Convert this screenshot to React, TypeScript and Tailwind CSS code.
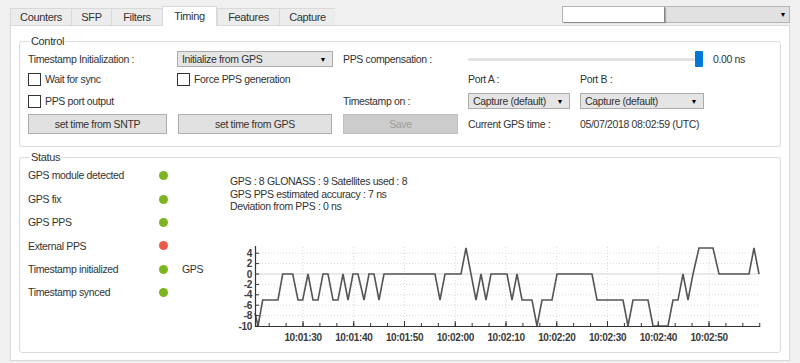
import React from "react";

const pts: [number, number][] = [
  [255, -7.5], [258, -10], [262.7, -5], [278, -5], [282.7, 0], [292.7, 0], [298, -5], [302.7, -5],
  [308, 0], [313, -5], [318, -5], [323, 0], [328, 0], [333, -5], [338, -5], [343, 0], [348, -5],
  [353, 0], [358, 0], [364, -5], [369, 0], [374, 0], [379, -5], [384, 0], [435, 0], [440, -5],
  [445, 0], [461, 0], [466, 5], [476, -5], [481, 0], [486, -5], [491, 0], [507, 0], [512, -5],
  [517, 0], [522, -5], [532, -5], [537, -10], [542, -5], [552, -5], [557, 0], [592, 0], [597, -5],
  [623, -5], [628, -10], [633, -5], [648, -5], [653, -10], [668, -10], [673, -5], [678, -5],
  [683, 0], [688, -5], [693, 0], [699, 5], [713, 5], [719, 0], [749, 0], [754, 5], [759, 0],
];

const vy = (v: number) => 273 - 5.2 * v;

function Chart() {
  const majors = [0, 1, 2, 3, 4, 5, 6, 7, 8].map((k) => 303 + 50.75 * k);
  const labels = ["10:01:30", "10:01:40", "10:01:50", "10:02:00", "10:02:10", "10:02:20", "10:02:30", "10:02:40", "10:02:50"];
  const minors: number[] = [];
  for (let x = 303 - 50.75; x < 760; x += 50.75 / 3) {
    if (x > 256) minors.push(x);
  }
  const yv = [4, 2, 0, -2, -4, -6, -8, -10];
  const ff = "'Liberation Sans', Arial, sans-serif";
  return (
    <svg width={544} height={106} viewBox="222 240 544 106" className="block">
      {yv.filter((v) => v !== 0 && v !== -10).map((v) => (
        <line key={v} x1={256} x2={760} y1={vy(v)} y2={vy(v)} stroke="#dcdcdc" strokeWidth={1} strokeDasharray="1 2" />
      ))}
      {majors.map((x) => (
        <line key={x} x1={x} x2={x} y1={246} y2={325} stroke="#dcdcdc" strokeWidth={1} strokeDasharray="1 2" />
      ))}
      <line x1={256} x2={760} y1={vy(0)} y2={vy(0)} stroke="#e2e2e2" strokeWidth={1.5} />
      <polyline
        points={pts.map(([x, v]) => `${x},${vy(v)}`).join(" ")}
        fill="none"
        stroke="#555"
        strokeWidth={1.6}
        strokeLinejoin="miter"
      />
      <line x1={255.5} x2={255.5} y1={245} y2={326} stroke="#333" strokeWidth={1.2} />
      <line x1={255} x2={760} y1={325.5} y2={325.5} stroke="#333" strokeWidth={1.2} />
      {yv.map((v) => (
        <g key={v}>
          <line x1={255} x2={259} y1={vy(v)} y2={vy(v)} stroke="#333" strokeWidth={1} />
          <text x={252} y={vy(v) + 3.6} textAnchor="end" fontSize={10} fontWeight={700} fill="#3a3a3a" fontFamily={ff}>
            {v}
          </text>
        </g>
      ))}
      {minors.map((x) => (
        <line key={"m" + x} x1={x} x2={x} y1={322} y2={326} stroke="#333" strokeWidth={1} />
      ))}
      {majors.map((x, i) => (
        <g key={"l" + x}>
          <line x1={x} x2={x} y1={320} y2={326} stroke="#333" strokeWidth={1} />
          <text x={x} y={340} textAnchor="middle" fontSize={10} fontWeight={700} fill="#3a3a3a" fontFamily={ff}>
            {labels[i]}
          </text>
        </g>
      ))}
    </svg>
  );
}

function Checkbox({ label }: { label: string }) {
  return (
    <div className="flex items-center gap-[4px]">
      <div className="w-[13px] h-[13px] border border-[#333] bg-white" />
      <span>{label}</span>
    </div>
  );
}

function Select({ text, w }: { text: string; w: string }) {
  return (
    <div className={`${w} h-[16px] bg-[#e5e5e5] border border-[#acacac] flex items-center justify-between pl-[4px] pr-[6px]`}>
      <span>{text}</span>
      <span className="text-[7px] leading-none text-black">▼</span>
    </div>
  );
}

function Dot({ red }: { red?: boolean }) {
  return <div className={`w-[9px] h-[9px] rounded-full ${red ? "bg-[#ea5a47]" : "bg-[#7cb51d]"}`} />;
}

export default function App() {
  const tabs = ["Counters", "SFP", "Filters", "Timing", "Features", "Capture"];
  const tabW = ["w-[61px]", "w-[40px]", "w-[51px]", "w-[55px]", "w-[62px]", "w-[56px]"];
  const statusRows: { l: string; red?: boolean; extra?: string }[] = [
    { l: "GPS module detected" },
    { l: "GPS fix" },
    { l: "GPS PPS" },
    { l: "External PPS", red: true },
    { l: "Timestamp initialized", extra: "GPS" },
    { l: "Timestamp synced" },
  ];
  return (
    <div className="w-[800px] h-[363px] bg-[#f0f0f0] overflow-hidden text-[10.5px] tracking-[-0.35px] text-[#333] font-['Liberation_Sans',Arial,sans-serif] leading-none">
      <div className="h-[25px] flex items-end pl-[10px] pr-[10px]">
        {tabs.map((t, i) =>
          t === "Timing" ? (
            <div key={t} className={`${tabW[i]} h-[20px] -mb-px bg-white border border-[#d9d9d9] border-b-0 flex items-center justify-center relative z-10 text-[11px]`}>
              {t}
            </div>
          ) : (
            <div key={t} className={`${tabW[i]} h-[17px] bg-[#ececec] border border-[#d9d9d9] border-b-0 border-r-0 last:border-r flex items-center justify-center text-[11px]`}>
              {t}
            </div>
          )
        )}
        <div className="ml-auto self-start mt-[6px] w-[228px] h-[17px] bg-[#e1e1e1] border border-[#b5b5b5] flex items-center">
          <div className="w-[102px] h-[15px] bg-white border-r border-[#888] shadow-[1px_1px_1px_rgba(0,0,0,0.25)]" />
          <span className="ml-auto mr-[3px] text-[7px] text-black">▼</span>
        </div>
      </div>
      <div className="mx-[10px] h-[336px] bg-white border border-[#d9d9d9] pt-[15px] px-[8px] flex flex-col gap-[10px]">
        <div className="relative h-[106px] border border-[#dcdcdc] rounded-[3px] pt-[7px] pl-[8px]">
          <span className="absolute left-[10px] -top-[6px] bg-white px-[1px] text-[11px]">Control</span>
          <div className="grid grid-cols-[149px_166px_125px_112px_180px] grid-rows-[20px_21px_22px_24px] items-center">
            <span>Timestamp Initialization :</span>
            <Select text="Initialize from GPS" w="w-[156px]" />
            <span>PPS compensation :</span>
            <div className="col-span-2 flex items-center">
              <div className="relative w-[235px] h-[16px] flex items-center">
                <div className="w-full h-[3px] bg-[#e2e2e2] rounded-full" />
                <div className="absolute right-0 top-0 w-[8px] h-[16px] bg-[#0078d7] rounded-[1px]" />
              </div>
              <span className="ml-[10px]">0.00 ns</span>
            </div>

            <Checkbox label="Wait for sync" />
            <Checkbox label="Force PPS generation" />
            <span />
            <span>Port A :</span>
            <span>Port B :</span>

            <Checkbox label="PPS port output" />
            <span />
            <span>Timestamp on :</span>
            <Select text="Capture (default)" w="w-[102px]" />
            <Select text="Capture (default)" w="w-[124px]" />

            <div className="w-[139px] h-[20px] bg-[#e1e1e1] border border-[#adadad] flex items-center justify-center">set time from SNTP</div>
            <div className="ml-px w-[154px] h-[20px] bg-[#e1e1e1] border border-[#adadad] flex items-center justify-center">set time from GPS</div>
            <div className="w-[115px] h-[20px] bg-[#cccccc] border border-[#bfbfbf] flex items-center justify-center text-[#9d9d9d]">Save</div>
            <span>Current GPS time :</span>
            <span>05/07/2018 08:02:59 (UTC)</span>
          </div>
        </div>
        <div className="relative h-[196px] border border-[#dcdcdc] rounded-[3px] flex">
          <span className="absolute left-[10px] -top-[6px] bg-white px-[1px] text-[11px]">Status</span>
          <div className="w-[202px] pl-[8px] pt-[6px] flex flex-col">
            {statusRows.map((r) => (
              <div key={r.l} className="h-[23.4px] flex items-center">
                <span className="w-[131px]">{r.l}</span>
                <Dot red={r.red} />
                {r.extra && <span className="ml-[14px]">{r.extra}</span>}
              </div>
            ))}
          </div>
          <div className="flex flex-col pt-[17px]">
            <div className="pl-[8px] leading-[12.5px]">
              <div>GPS : 8 GLONASS : 9 Satellites used : 8</div>
              <div>GPS PPS estimated accuracy : 7 ns</div>
              <div>Deviation from PPS : 0 ns</div>
            </div>
            <div className="mt-[28px]">
              <Chart />
            </div>
          </div>
        </div>
      </div>
    </div>
  );
}
